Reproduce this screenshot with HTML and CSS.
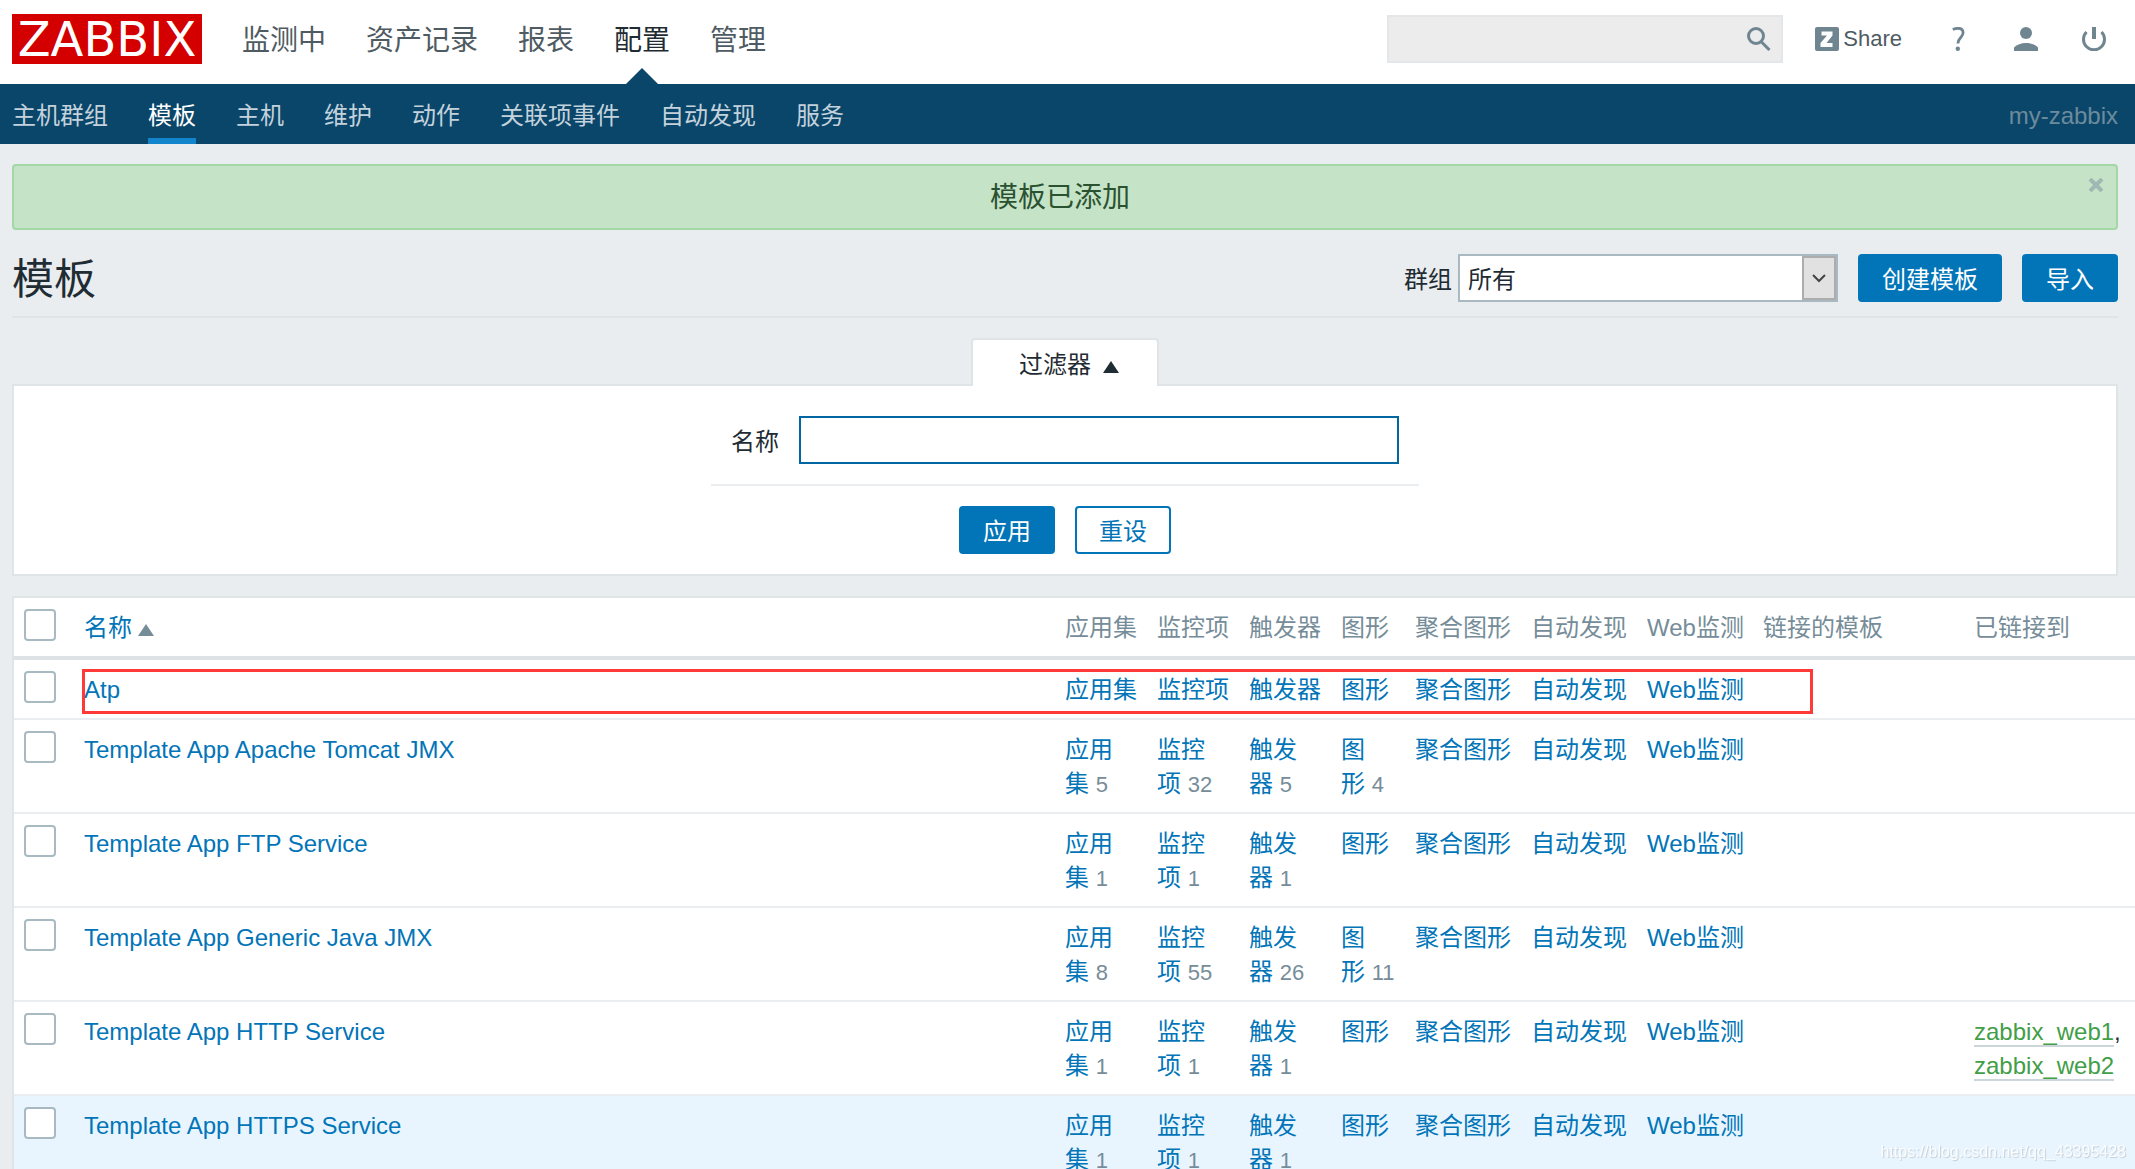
FILE: index.html
```html
<!DOCTYPE html>
<html lang="zh-CN">
<head>
<meta charset="utf-8">
<title>模板</title>
<link rel="stylesheet" href="styles.css">
</head>
<body>
<header class="top">
  <a class="logo" href="#">ZABBIX</a>
  <nav class="menu">
    <a href="#">监测中</a>
    <a href="#">资产记录</a>
    <a href="#">报表</a>
    <a href="#" class="selected">配置</a>
    <a href="#">管理</a>
  </nav>
  <form class="search">
    <input type="text" aria-label="搜索">
    <button type="button" aria-label="搜索"><svg viewBox="0 0 24 24" width="24" height="24"><circle cx="9" cy="9" r="7.5"/><path d="M14 14.500L22.500 23"/></svg></button>
  </form>
  <div class="tools">
    <a class="share" href="#"><span class="z"><svg viewBox="0 0 24 24" width="24" height="24"><rect width="24" height="24" rx="2" fill="#6f8590"/><path d="M6.500 4.500h11v4l-6 7.500h6v4h-12v-4l6.500-7.500H6.500z" fill="#fff"/></svg></span>Share</a>
    <a href="#" aria-label="帮助"><svg viewBox="0 0 24 24" width="24" height="24"><path d="M6.800 2.500C8.500 1.700 10 1.300 11.800 1.300c3.600 0 5.300 1.800 5.300 4.500 0 4.500-5.200 5-5.200 10.700" fill="none" stroke="#6f8590" stroke-width="2.800"/><circle cx="11.800" cy="21.800" r="2.200" fill="#6f8590"/></svg></a>
    <a href="#" aria-label="用户"><svg viewBox="0 0 24 24" width="24" height="24" fill="#6f8590"><circle cx="12" cy="6" r="6"/><path d="M0 24v-3.500C3 17.500 7 16 12 16s9 1.500 12 4.500V24z"/></svg></a>
    <a href="#" aria-label="退出"><svg viewBox="0 0 24 24" width="24" height="24" fill="none" stroke="#6f8590"><path d="M12 0v12" stroke-width="4"/><path d="M4.500 5a10.500 10.500 0 1 0 15 0" stroke-width="3"/></svg></a>
  </div>
</header>
<nav class="sub">
  <a href="#">主机群组</a>
  <a href="#" class="selected">模板</a>
  <a href="#">主机</a>
  <a href="#">维护</a>
  <a href="#">动作</a>
  <a href="#">关联项事件</a>
  <a href="#">自动发现</a>
  <a href="#">服务</a>
  <span class="server">my-zabbix</span>
</nav>
<main>
  <div class="message">模板已添加
    <button type="button" aria-label="关闭"><svg viewBox="0 0 16 14" width="16" height="14"><path d="M2 1l12 12M14 1L2 13"/></svg></button>
  </div>
  <div class="title">
    <h1>模板</h1>
    <label for="group">群组</label>
    <div class="select"><select id="group"><option>所有</option></select><svg viewBox="0 0 34 44" width="34" height="44"><rect x="1" y="1" width="32" height="42"/><path d="M11 19l6 6 6-6"/></svg></div>
    <button type="button" class="btn">创建模板</button>
    <button type="button" class="btn">导入</button>
  </div>
  <form class="filter">
    <button type="button" class="tab">过滤器<i class="up"></i></button>
    <div class="box">
      <div class="field"><label for="name">名称</label><input id="name" type="text"></div>
      <div class="actions"><button type="button" class="btn">应用</button><button type="button" class="btn alt">重设</button></div>
    </div>
  </form>
  <table>
    <colgroup><col class="c-check"><col><col class="c-three"><col class="c-three"><col class="c-three"><col class="c-two"><col class="c-four"><col class="c-four"><col class="c-four"><col class="c-linked"><col class="c-to"></colgroup>
    <thead><tr><th><input type="checkbox" aria-label="全选"></th><th><a href="#">名称<i class="up"></i></a></th><th>应用集</th><th>监控项</th><th>触发器</th><th>图形</th><th>聚合图形</th><th>自动发现</th><th class="web">Web监测</th><th>链接的模板</th><th>已链接到</th></tr></thead>
    <tbody>
    <tr class="marked"><td><input type="checkbox" aria-label="Atp"></td><td><a href="#">Atp</a><div class="mark"></div></td><td><a href="#">应用集</a></td><td><a href="#">监控项</a></td><td><a href="#">触发器</a></td><td><a href="#">图形</a></td><td><a href="#">聚合图形</a></td><td><a href="#">自动发现</a></td><td class="web"><a href="#">Web监测</a></td><td></td><td></td></tr>
    <tr><td><input type="checkbox" aria-label="Template App Apache Tomcat JMX"></td><td><a href="#">Template App Apache Tomcat JMX</a></td><td><a href="#">应用集</a>&nbsp;<b>5</b></td><td><a href="#">监控项</a>&nbsp;<b>32</b></td><td><a href="#">触发器</a>&nbsp;<b>5</b></td><td><a href="#">图形</a>&nbsp;<b>4</b></td><td><a href="#">聚合图形</a></td><td><a href="#">自动发现</a></td><td class="web"><a href="#">Web监测</a></td><td></td><td></td></tr>
    <tr><td><input type="checkbox" aria-label="Template App FTP Service"></td><td><a href="#">Template App FTP Service</a></td><td><a href="#">应用集</a>&nbsp;<b>1</b></td><td><a href="#">监控项</a>&nbsp;<b>1</b></td><td><a href="#">触发器</a>&nbsp;<b>1</b></td><td><a href="#">图形</a></td><td><a href="#">聚合图形</a></td><td><a href="#">自动发现</a></td><td class="web"><a href="#">Web监测</a></td><td></td><td></td></tr>
    <tr><td><input type="checkbox" aria-label="Template App Generic Java JMX"></td><td><a href="#">Template App Generic Java JMX</a></td><td><a href="#">应用集</a>&nbsp;<b>8</b></td><td><a href="#">监控项</a>&nbsp;<b>55</b></td><td><a href="#">触发器</a>&nbsp;<b>26</b></td><td><a href="#">图形</a>&nbsp;<b>11</b></td><td><a href="#">聚合图形</a></td><td><a href="#">自动发现</a></td><td class="web"><a href="#">Web监测</a></td><td></td><td></td></tr>
    <tr><td><input type="checkbox" aria-label="Template App HTTP Service"></td><td><a href="#">Template App HTTP Service</a></td><td><a href="#">应用集</a>&nbsp;<b>1</b></td><td><a href="#">监控项</a>&nbsp;<b>1</b></td><td><a href="#">触发器</a>&nbsp;<b>1</b></td><td><a href="#">图形</a></td><td><a href="#">聚合图形</a></td><td><a href="#">自动发现</a></td><td class="web"><a href="#">Web监测</a></td><td></td><td><a class="host" href="#">zabbix_web1</a>, <a class="host" href="#">zabbix_web2</a></td></tr>
    <tr class="hover"><td><input type="checkbox" aria-label="Template App HTTPS Service"></td><td><a href="#">Template App HTTPS Service</a></td><td><a href="#">应用集</a>&nbsp;<b>1</b></td><td><a href="#">监控项</a>&nbsp;<b>1</b></td><td><a href="#">触发器</a>&nbsp;<b>1</b></td><td><a href="#">图形</a></td><td><a href="#">聚合图形</a></td><td><a href="#">自动发现</a></td><td class="web"><a href="#">Web监测</a></td><td></td><td></td></tr>
    </tbody>
  </table>
</main>
<div class="watermark">https://blog.csdn.net/qq_43395428</div>
</body>
</html>
```
FILE: styles.css
```css
* { box-sizing: border-box; }
body {
  margin: 0;
  height: 100vh;
  display: flex;
  flex-direction: column;
  background: #e9edf0;
  color: #1f2c33;
  font: 24px/34px "Liberation Sans", "Noto Sans CJK SC", sans-serif;
}
a { color: #0275b8; text-decoration: none; }
button, input, select { font: inherit; color: inherit; margin: 0; }
svg { display: block; }

.top { display: flex; align-items: center; height: 84px; flex: none; background: #fff; padding: 0 29px 6px 12px; }
.logo { background: #d40000; color: #fff; font: 48px/50px "DejaVu Sans", sans-serif; width: 190px; height: 50px; text-align: center; }
.menu { display: flex; gap: 40px; margin-left: 40px; padding-top: 4px; font-size: 28px; }
.menu a { color: #4f5b62; position: relative; }
.menu .selected { color: #1f2c33; }
.menu .selected::after {
  content: "";
  position: absolute;
  left: 50%;
  top: 44px;
  margin-left: -16px;
  border: 16px solid transparent;
  border-top: 0;
  border-bottom-color: #0a466a;
}
.search { display: flex; width: 396px; height: 48px; margin-left: auto; background: #ececec; border: 2px solid #e4e7e9; }
.search input { flex: 1; min-width: 0; border: 0; background: none; padding: 0 8px; outline: 0; }
.search button { border: 0; background: none; padding: 0 10px; }
.search svg { fill: none; stroke: #6f8590; stroke-width: 3; }
.tools { display: flex; align-items: center; margin-left: 32px; gap: 44px; }
.share { display: flex; align-items: center; gap: 4px; font-size: 22px; color: #4f5b62; }

.sub { display: flex; gap: 40px; height: 60px; flex: none; background: #0a466a; padding: 0 17px 0 12px; line-height: 64px; }
.sub a { color: #c3d2dc; }
.sub .selected { color: #fff; border-bottom: 6px solid #1284cc; }
.server { margin-left: auto; color: #6c8b9c; }

main { flex: 1; min-height: 0; overflow: auto; scrollbar-width: none; padding: 20px 0 0 12px; }
.message {
  position: relative;
  margin-right: 17px;
  padding: 15px 20px 13px 10px;
  border: 2px solid #a3d7a6;
  border-radius: 4px;
  background: #c5e3c7;
  color: #2b5230;
  font-size: 28px;
  text-align: center;
}
.message button { position: absolute; top: 12px; right: 12px; border: 0; padding: 0; background: none; }
.message svg { stroke: #9fb8b3; stroke-width: 4; }

.title { display: flex; align-items: center; margin-right: 17px; padding: 24px 0 14px; border-bottom: 2px solid #dfe4e7; }
h1 { margin: 0 auto 0 0; padding-top: 4px; font-size: 42px; font-weight: 400; line-height: 44px; }
.title label { margin-right: 6px; padding-top: 4px; }
.select { position: relative; width: 380px; }
.select select { appearance: none; display: block; width: 100%; height: 48px; border: 2px solid #a9b9c1; border-radius: 0; background: #fff; padding: 4px 40px 0 8px; }
.select svg { position: absolute; top: 2px; right: 2px; fill: #e1e1e1; stroke: #adadad; stroke-width: 2; pointer-events: none; }
.select svg path { fill: none; stroke: #444; }
.btn { height: 48px; padding: 3px 22px 0; border: 2px solid #0275b8; border-radius: 4px; background: #0275b8; color: #fff; }
.btn.alt { background: #fff; color: #0275b8; }
.title .btn { margin-left: 20px; }

.up { display: inline-block; border: 8px solid transparent; border-top: 0; border-bottom: 12px solid; }
.filter { margin: 20px 17px 20px 0; display: flex; flex-direction: column; align-items: center; }
.tab { height: 48px; width: 188px; margin-bottom: -2px; z-index: 1; border: 2px solid #dfe4e7; border-bottom: 0; border-radius: 4px 4px 0 0; background: #fff; padding: 4px 0 0 8px; }
.tab .up { margin-left: 12px; }
.box { width: 100%; height: 192px; border: 2px solid #dfe4e7; background: #fff; padding-top: 30px; display: flex; flex-direction: column; align-items: center; }
.field { display: flex; align-items: center; gap: 20px; padding: 0 20px 20px; border-bottom: 2px solid #ebeef0; }
.field label { padding-top: 4px; }
.field input { width: 600px; height: 48px; border: 2px solid #0067a3; background: #fff; padding: 0 8px; outline: 0; }
.actions { display: flex; gap: 20px; margin-top: 20px; }

table { width: 100%; table-layout: fixed; border-collapse: separate; border-spacing: 0; background: #fff; border: 2px solid #dfe4e7; border-right: 0; }
.c-check { width: 60px; }
.c-three { width: 92px; }
.c-two { width: 74px; }
.c-four { width: 116px; }
.c-linked { width: 211px; }
.c-to { width: 171px; }
th, td { padding: 13px 10px 11px; border-bottom: 2px solid #e9edf0; text-align: left; vertical-align: top; font-weight: 400; }
th { color: #768d99; border-bottom: 4px solid #dce2e5; }
th .up { margin-left: 6px; color: #768d99; }
td b { font-size: 22px; line-height: 22px; font-weight: 400; color: #768d99; }
.web { white-space: nowrap; }
th:first-child, td:first-child { padding: 11px 10px 0; }
[type="checkbox"] { appearance: none; display: block; width: 32px; height: 32px; border: 2px solid #a9b9c1; border-radius: 4px; background: #fff; }
.hover td { background: #e8f5ff; }
.host { color: #429e47; border-bottom: 2px solid #ccd5d9; }
.marked { position: relative; }
.mark { position: absolute; top: 9px; bottom: 6px; left: 68px; right: 322px; border: 3px solid #ff3838; pointer-events: none; }
.watermark { position: fixed; right: 9px; bottom: 4px; font-size: 16px; line-height: 26px; color: #fff; text-shadow: 1px 1px 1px #bcc4ca; opacity: 0.8; }
```
